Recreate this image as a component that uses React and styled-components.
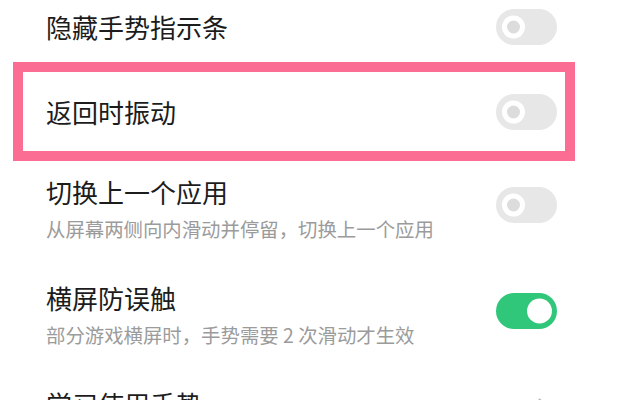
import React from 'react';
import styled, { createGlobalStyle } from 'styled-components';

const GlobalStyle = createGlobalStyle`
  body {
    margin: 0;
    background: #fff;
    font-family: 'Noto Sans CJK SC', 'Noto Sans', sans-serif;
  }
`;

const Page = styled.div`
  width: 626px;
  height: 400px;
  overflow: hidden;
  background: #fff;
`;

const Row = styled.div`
  display: flex;
  justify-content: space-between;
  align-items: ${(p) => (p.$sub ? 'flex-start' : 'center')};
  box-sizing: border-box;
  height: ${(p) => p.$height || 'auto'};
  padding: ${(p) => p.$pad || '0 69px 0 46px'};
`;

const Highlight = styled.div`
  margin: 8px 51px 0 13px;
  border: 10px solid #fb6d92;
`;

const Texts = styled.div`
  display: flex;
  flex-direction: column;
  gap: 8px;
`;

const Title = styled.div`
  font-size: 26px;
  line-height: 30px;
  color: #1c1c1c;
`;

const Sub = styled.div`
  font-size: 19.4px;
  line-height: 28px;
  color: #9b9b9b;
`;

const Track = styled.div`
  position: relative;
  flex: none;
  width: 61px;
  height: 36px;
  border-radius: 18px;
  margin-top: ${(p) => (p.$sub ? '10px' : '0')};
  background: ${(p) => (p.$on ? '#30c77a' : '#e7e7e7')};
`;

const Knob = styled.div`
  position: absolute;
  top: 50%;
  transform: translateY(-50%);
  box-sizing: border-box;
  border-radius: 50%;
  ${(p) =>
    p.$on
      ? `right: 5px; width: 25px; height: 25px; background: #fff;`
      : `left: 6px; width: 23px; height: 23px; background: #dcdcdc; border: 5px solid #fff;`}
`;

const Toggle = ({ on, sub }) => (
  <Track $on={on} $sub={sub}>
    <Knob $on={on} />
  </Track>
);

const Chevron = styled.svg`
  flex: none;
  margin: 8px 8px 0 0;
`;

export default function App() {
  return (
    <Page>
      <GlobalStyle />
      <Row $height="54px">
        <Title>隐藏手势指示条</Title>
        <Toggle />
      </Row>
      <Highlight>
        <Row $height="79px" $pad="0 8px 0 23px">
          <Title>返回时振动</Title>
          <Toggle />
        </Row>
      </Highlight>
      <Row $sub $pad="16px 69px 24px 46px">
        <Texts>
          <Title>切换上一个应用</Title>
          <Sub>从屏幕两侧向内滑动并停留，切换上一个应用</Sub>
        </Texts>
        <Toggle sub />
      </Row>
      <Row $sub $pad="16px 69px 24px 46px">
        <Texts>
          <Title>横屏防误触</Title>
          <Sub>部分游戏横屏时，手势需要 2 次滑动才生效</Sub>
        </Texts>
        <Toggle on sub />
      </Row>
      <Row $sub $pad="16px 69px 0 46px">
        <Title>学习使用手势</Title>
        <Chevron width="12" height="20" viewBox="0 0 12 20">
          <path d="M2 2l8 8-8 8" fill="none" stroke="#b5b5b5" strokeWidth="2" />
        </Chevron>
      </Row>
    </Page>
  );
}
